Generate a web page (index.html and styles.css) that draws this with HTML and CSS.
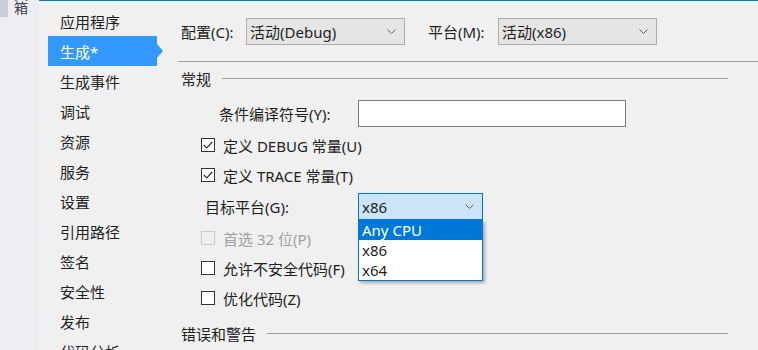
FILE: index.html
```html
<!DOCTYPE html>
<html lang="zh-CN">
<head>
    <meta charset="UTF-8">
    <title>项目属性 - 生成</title>
    <link rel="stylesheet" href="styles.css">
</head>
<body>
<div class="ide">
    <div class="toolbox">
        <div class="toolbox-grip"></div>
        <span class="toolbox-label">工具箱</span>
    </div>

    <div class="props">
        <nav class="tabs">
            <div class="tab">应用程序</div>
            <div class="tab active">生成*</div>
            <div class="tab">生成事件</div>
            <div class="tab">调试</div>
            <div class="tab">资源</div>
            <div class="tab">服务</div>
            <div class="tab">设置</div>
            <div class="tab">引用路径</div>
            <div class="tab">签名</div>
            <div class="tab">安全性</div>
            <div class="tab">发布</div>
            <div class="tab">代码分析</div>
        </nav>

        <main class="page">
            <div class="config-row">
                <span class="lbl-config">配置(C):</span>
                <div class="combo combo-config">
                    <span>活动(Debug)</span>
                    <svg class="chev" width="9" height="5" viewBox="0 0 9 5"><polyline points="0.5,0.5 4.5,4.5 8.5,0.5"/></svg>
                </div>
                <span class="lbl-platform">平台(M):</span>
                <div class="combo combo-config">
                    <span>活动(x86)</span>
                    <svg class="chev" width="9" height="5" viewBox="0 0 9 5"><polyline points="0.5,0.5 4.5,4.5 8.5,0.5"/></svg>
                </div>
            </div>

            <div class="rule"></div>

            <div class="group-head">
                <span>常规</span>
                <div class="group-line"></div>
            </div>

            <div class="field-row">
                <span class="lbl-symbols">条件编译符号(Y):</span>
                <div class="textbox"></div>
            </div>

            <div class="check-row">
                <span class="box"><svg width="10" height="8" viewBox="0 0 10 8"><polyline points="0.8,4 3.8,7 9.2,1"/></svg></span>
                <span>定义 DEBUG 常量(U)</span>
            </div>
            <div class="check-row">
                <span class="box"><svg width="10" height="8" viewBox="0 0 10 8"><polyline points="0.8,4 3.8,7 9.2,1"/></svg></span>
                <span>定义 TRACE 常量(T)</span>
            </div>

            <div class="target-row">
                <span class="lbl-target">目标平台(G):</span>
                <div class="combo combo-open">
                    <span>x86</span>
                    <svg class="chev" width="9" height="5" viewBox="0 0 9 5"><polyline points="0.5,0.5 4.5,4.5 8.5,0.5"/></svg>
                    <ul class="droplist">
                        <li class="selected">Any CPU</li>
                        <li>x86</li>
                        <li>x64</li>
                    </ul>
                </div>
            </div>

            <div class="check-row disabled">
                <span class="box"></span>
                <span>首选 32 位(P)</span>
            </div>
            <div class="check-row">
                <span class="box"></span>
                <span>允许不安全代码(F)</span>
            </div>
            <div class="check-row">
                <span class="box"></span>
                <span>优化代码(Z)</span>
            </div>

            <div class="group-head group-errors">
                <span>错误和警告</span>
                <div class="group-line"></div>
            </div>
        </main>
    </div>
</div>
</body>
</html>
```

FILE: styles.css
```css
* {
    box-sizing: border-box;
}

body {
    margin: 0;
    width: 758px;
    height: 350px;
    overflow: hidden;
    background: #f0f0f0;
    color: #1e1e1e;
    font-family: "Noto Sans", "Noto Sans CJK SC", sans-serif;
    font-size: 15px;
}

.ide {
    display: flex;
    height: 350px;
}

/* 左侧工具箱停靠条 */
.toolbox {
    width: 39px;
    flex: none;
    background: #eeeef2;
    display: flex;
    align-items: flex-start;
}

.toolbox-grip {
    width: 8px;
    height: 17px;
    background: #ccccd6;
}

.toolbox-label {
    writing-mode: vertical-rl;
    margin-left: 5px;
    margin-top: -27px;
    font-size: 14px;
    line-height: 14px;
    color: #3e3e55;
}

.props {
    flex: 1;
    display: flex;
    border-top: 1px solid #007acc;
}

/* 属性页标签 */
.tabs {
    width: 139px;
    flex: none;
    padding: 5px 0 0 9px;
}

.tab {
    position: relative;
    width: 109px;
    height: 30px;
    padding-left: 12px;
    display: flex;
    align-items: center;
    white-space: nowrap;
}

.tab.active {
    background: #3399ff;
    color: #fff;
}

.tab.active::after {
    content: "";
    position: absolute;
    left: 100%;
    top: 8px;
    border-left: 6px solid #3399ff;
    border-top: 7px solid transparent;
    border-bottom: 7px solid transparent;
}

/* 内容 */
.page {
    flex: 1;
    padding-top: 17px;
}

.config-row {
    display: flex;
    align-items: center;
    height: 27px;
    padding-left: 3px;
}

.lbl-config {
    width: 65px;
}

.lbl-platform {
    width: 70px;
    margin-left: 23px;
}

.combo {
    position: relative;
    height: 27px;
    display: flex;
    align-items: center;
    justify-content: space-between;
    padding: 0 8px 0 3px;
    border: 1px solid #adadad;
    background: #e5e5e5;
}

.combo-config {
    width: 159px;
}

.chev polyline {
    fill: none;
    stroke: #606060;
    stroke-width: 1;
}

.rule {
    margin-top: 16px;
    height: 1px;
    background: #a0a0a0;
}

.group-head {
    display: flex;
    align-items: center;
    height: 20px;
    margin-top: 6px;
    margin-right: 30px;
    padding-left: 3px;
}

.group-line {
    flex: 1;
    height: 1px;
    margin-left: 11px;
    background: #a0a0a0;
}

.group-errors {
    margin-top: 10px;
}

.field-row {
    display: flex;
    align-items: center;
    height: 27px;
    margin-top: 12px;
    padding-left: 41px;
}

.lbl-symbols {
    width: 139px;
}

.textbox {
    width: 268px;
    height: 27px;
    background: #fff;
    border: 1px solid #7a7a7a;
}

.check-row {
    display: flex;
    align-items: center;
    height: 30px;
    padding-left: 23px;
}

.field-row + .check-row {
    margin-top: 3px;
}

.box {
    width: 14px;
    height: 14px;
    margin-right: 8px;
    border: 1px solid #333;
    background: #fff;
    display: flex;
    align-items: center;
    justify-content: center;
}

.box polyline {
    fill: none;
    stroke: #333;
    stroke-width: 1.2;
}

.check-row.disabled {
    color: #a0a0a0;
}

.check-row.disabled .box {
    border-color: #cccccc;
    background: #f0f0f0;
}

.target-row {
    display: flex;
    align-items: center;
    height: 33px;
    padding-left: 27px;
}

.lbl-target {
    width: 153px;
}

.combo-open {
    width: 125px;
    background: #cce4f7;
    border-color: #0078d7;
    z-index: 2;
}

.droplist {
    position: absolute;
    left: -1px;
    top: 100%;
    width: 125px;
    margin: 1px 0 0;
    padding: 0;
    list-style: none;
    background: #fff;
    border: 1px solid #0078d7;
    border-top: none;
    box-shadow: 2px 2px 3px rgba(0, 0, 0, 0.3);
}

.droplist li {
    height: 20px;
    line-height: 20px;
    padding-left: 3px;
}

.droplist li.selected {
    background: #0078d7;
    color: #fff;
}
```
